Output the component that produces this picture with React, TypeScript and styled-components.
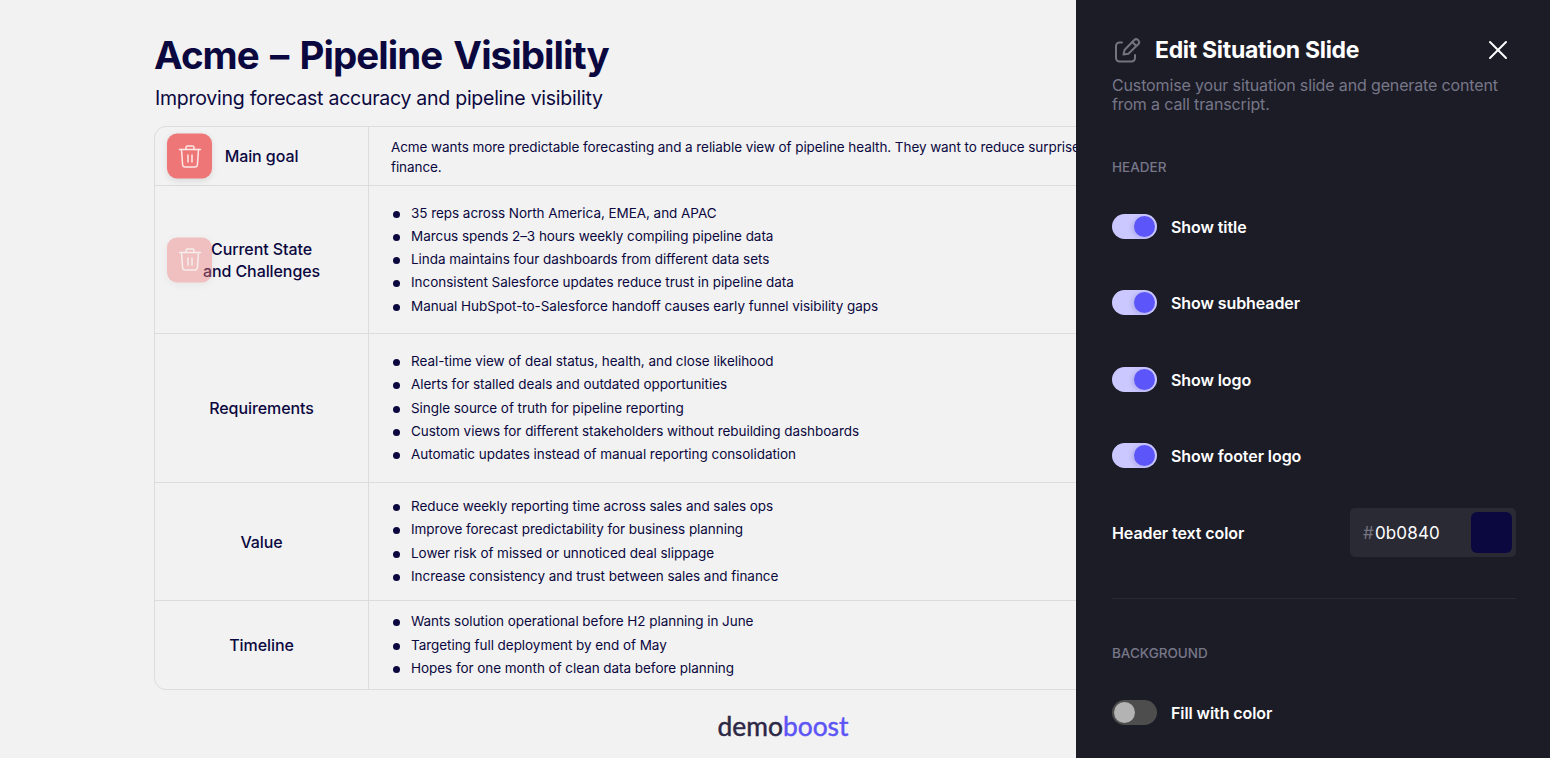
import React from "react";
import styled, { createGlobalStyle } from "styled-components";
import { X } from "lucide-react";

const GlobalStyle = createGlobalStyle`
  html, body {
    margin: 0;
    height: 100%;
    overflow: hidden;
    background: #f2f2f2;
    font-family: "Inter", "Open Sans", sans-serif;
  }
  * { box-sizing: border-box; }
`;

const Page = styled.div`
  position: relative;
  width: 100vw;
  height: 100vh;
  overflow: hidden;
  padding: 32px 138px 0 154px;
  color: #0b0840;
`;

const Title = styled.h1`
  margin: 0;
  font-size: 38.5px;
  line-height: 46px;
  font-weight: 700;
  letter-spacing: -0.95px;
  word-spacing: 3px;
`;

const Subtitle = styled.p`
  margin: 8px 0 16px 1px;
  font-size: 19.5px;
  line-height: 24px;
  font-weight: 400;
  letter-spacing: -0.26px;
`;

const Table = styled.div`
  border: 1px solid #dcdcdc;
  border-radius: 12px;
  display: grid;
  grid-template-columns: 214px 1fr;
  grid-template-rows: 59px 148px 149px 118px 88px;
`;

const Row = styled.div`
  display: contents;
`;

const LabelCell = styled.div<{ $last?: boolean }>`
  position: relative;
  display: flex;
  align-items: center;
  justify-content: center;
  text-align: center;
  border-right: 1px solid #dcdcdc;
  border-bottom: ${(p) => (p.$last ? "none" : "1px solid #dcdcdc")};
  font-size: 16px;
  line-height: 22px;
  font-weight: 500;
  letter-spacing: -0.08px;
`;

const ContentCell = styled.div<{ $last?: boolean }>`
  display: flex;
  flex-direction: column;
  justify-content: center;
  min-width: 0;
  padding: 0 6px 0 22px;
  border-bottom: ${(p) => (p.$last ? "none" : "1px solid #dcdcdc")};
  font-size: 13.5px;
  line-height: 20px;
  letter-spacing: -0.05px;
`;

const Paragraph = styled.p`
  margin: 2px 0 0;
  white-space: pre;
  letter-spacing: -0.08px;
`;

const Bullets = styled.ul`
  list-style: none;
  margin: -1px 0 0;
  padding: 0;
`;

const Bullet = styled.li`
  display: flex;
  align-items: center;
  gap: 11px;
  height: 23.25px;
  &::before {
    content: "";
    width: 7px;
    height: 7px;
    margin: 3px 0 0 2px;
    border-radius: 50%;
    background: #0b0840;
  }
`;

const DeleteButton = styled.button<{ $faded?: boolean }>`
  position: absolute;
  left: 12px;
  top: 50%;
  transform: translateY(-50%);
  width: 45px;
  height: 45px;
  padding: 0;
  border: none;
  border-radius: 10px;
  display: flex;
  align-items: center;
  justify-content: center;
  background: #ef7676;
  color: #fde8e8;
  box-shadow: 0 2px 6px rgba(0, 0, 0, 0.1);
  opacity: ${(p) => (p.$faded ? 0.4 : 1)};
`;

const Footer = styled.div`
  display: flex;
  justify-content: center;
  margin-top: 20px;
  font-family: "Lato", "Inter", sans-serif;
  font-size: 26.4px;
  line-height: 32px;
  font-weight: 400;
  color: #2b2745;
  -webkit-text-stroke: 0.45px #2b2745;
  span {
    color: #5c55f5;
    -webkit-text-stroke: 0.45px #5c55f5;
  }
`;

const Panel = styled.aside`
  position: absolute;
  top: 0;
  right: 0;
  bottom: 0;
  width: 474px;
  padding: 34px 34px 0 36px;
  background: #1c1c27;
  color: #fff;
  overflow: hidden;
`;

const PanelHead = styled.div`
  display: flex;
  align-items: center;
  gap: 14px;
  height: 32px;
  padding-left: 3px;
`;

const PanelIcon = styled.span`
  display: flex;
  color: #74747f;
`;

const PanelTitle = styled.h2`
  flex: 1;
  margin: 0;
  font-size: 23px;
  line-height: 32px;
  font-weight: 700;
  letter-spacing: -0.3px;
`;

const CloseButton = styled.button`
  display: flex;
  padding: 0;
  margin-right: 2px;
  background: none;
  border: none;
  color: #fff;
`;

const PanelIntro = styled.p`
  margin: 10px 0 0;
  font-size: 16px;
  line-height: 19px;
  color: #777788;
  letter-spacing: -0.14px;
`;

const SectionLabel = styled.div<{ $top: number }>`
  margin-top: ${(p) => p.$top}px;
  font-size: 13.5px;
  line-height: 18px;
  font-weight: 500;
  color: #777788;
`;

const ToggleRow = styled.div<{ $top?: number }>`
  display: flex;
  align-items: center;
  gap: 14px;
  height: 25px;
  margin-top: ${(p) => p.$top ?? 51.33}px;
`;

const Toggle = styled.span<{ $on?: boolean }>`
  position: relative;
  width: 45px;
  height: 25px;
  border-radius: 13px;
  background: ${(p) => (p.$on ? "#cbc8ff" : "#4d4d4d")};
  &::after {
    content: "";
    position: absolute;
    top: 2px;
    left: ${(p) => (p.$on ? "22px" : "2px")};
    width: 21px;
    height: 21px;
    border-radius: 50%;
    background: ${(p) => (p.$on ? "#5c55f9" : "#b3b3b3")};
    box-shadow: ${(p) => (p.$on ? "-2px 1px 4px rgba(60, 50, 160, 0.2)" : "none")};
  }
`;

const RowLabel = styled.span`
  padding-top: 1px;
  font-size: 16px;
  line-height: 22px;
  font-weight: 600;
  letter-spacing: -0.08px;
`;

const ColorRow = styled.div`
  display: flex;
  align-items: center;
  justify-content: space-between;
  margin-top: 40px;
`;

const ColorField = styled.div`
  display: flex;
  align-items: center;
  justify-content: space-between;
  width: 166px;
  height: 49px;
  padding: 4px 4px 4px 13px;
  border-radius: 5px;
  background: #2a2a35;
`;

const ColorValue = styled.span`
  padding-top: 1px;
  font-size: 17px;
  letter-spacing: 0.15px;
  i {
    margin-right: 1px;
    font-style: normal;
    color: #74747f;
  }
`;

const Swatch = styled.span`
  width: 41px;
  height: 41px;
  border-radius: 6px;
  background: #0b0840;
`;

const Divider = styled.hr`
  margin: 41px 0 0;
  border: none;
  border-top: 1px solid #2a2a35;
`;

const TrashIcon = () => (
  <svg width="24" height="26" viewBox="0 0 24 26" fill="none" stroke="currentColor" strokeWidth="1.5" strokeLinecap="round" strokeLinejoin="round">
    <path d="M1.5 6h21" />
    <path d="M8 6V4a1.5 1.5 0 0 1 1.5-1.5h5A1.5 1.5 0 0 1 16 4v2" />
    <path d="M3.5 6l1.1 15.2a2.5 2.5 0 0 0 2.5 2.3h9.8a2.5 2.5 0 0 0 2.5-2.3L20.5 6" />
    <path d="M10 11.5v7M14 11.5v7" />
  </svg>
);

const PenIcon = () => (
  <svg width="26" height="26" viewBox="0 0 26 26" fill="none" stroke="currentColor" strokeWidth="2" strokeLinecap="round" strokeLinejoin="round">
    <path d="M7 5.5H4.5A3.5 3.5 0 0 0 1 9v12a3.5 3.5 0 0 0 3.5 3.5h12a3.5 3.5 0 0 0 3.5-3.5v-3" />
    <path d="M8.5 17.5l1-4.5L19 3.2a2.9 2.9 0 0 1 4.2 4.1l-9.8 9.4z" />
    <path d="M17.3 5l4 4" />
  </svg>
);

const rows = [
  {
    label: ["Main goal"],
    text: "Acme wants more predictable forecasting and a reliable view of pipeline health. They want to reduce surprises late in the quarter and build trust between sales and\nfinance.",
    remove: "solid",
  },
  {
    label: ["Current State", "and Challenges"],
    remove: "faded",
    items: [
      "35 reps across North America, EMEA, and APAC",
      "Marcus spends 2–3 hours weekly compiling pipeline data",
      "Linda maintains four dashboards from different data sets",
      "Inconsistent Salesforce updates reduce trust in pipeline data",
      "Manual HubSpot-to-Salesforce handoff causes early funnel visibility gaps",
    ],
  },
  {
    label: ["Requirements"],
    items: [
      "Real-time view of deal status, health, and close likelihood",
      "Alerts for stalled deals and outdated opportunities",
      "Single source of truth for pipeline reporting",
      "Custom views for different stakeholders without rebuilding dashboards",
      "Automatic updates instead of manual reporting consolidation",
    ],
  },
  {
    label: ["Value"],
    items: [
      "Reduce weekly reporting time across sales and sales ops",
      "Improve forecast predictability for business planning",
      "Lower risk of missed or unnoticed deal slippage",
      "Increase consistency and trust between sales and finance",
    ],
  },
  {
    label: ["Timeline"],
    items: [
      "Wants solution operational before H2 planning in June",
      "Targeting full deployment by end of May",
      "Hopes for one month of clean data before planning",
    ],
  },
];

const App = () => {
  return (
    <>
      <GlobalStyle />
      <Page>
        <Title>Acme – Pipeline Visibility</Title>
        <Subtitle>Improving forecast accuracy and pipeline visibility</Subtitle>
        <Table>
          {rows.map((row, i) => {
            const last = i === rows.length - 1;
            return (
              <Row key={row.label[0]}>
                <LabelCell $last={last}>
                  {row.remove && (
                    <DeleteButton $faded={row.remove === "faded"}>
                      <TrashIcon />
                    </DeleteButton>
                  )}
                  <div>
                    {row.label.map((line) => (
                      <div key={line}>{line}</div>
                    ))}
                  </div>
                </LabelCell>
                <ContentCell $last={last}>
                  {row.items ? (
                    <Bullets>
                      {row.items.map((item) => (
                        <Bullet key={item}>{item}</Bullet>
                      ))}
                    </Bullets>
                  ) : (
                    <Paragraph>{row.text}</Paragraph>
                  )}
                </ContentCell>
              </Row>
            );
          })}
        </Table>
        <Footer>
          <div>
            demo<span>boost</span>
          </div>
        </Footer>

        <Panel>
          <PanelHead>
            <PanelIcon>
              <PenIcon />
            </PanelIcon>
            <PanelTitle>Edit Situation Slide</PanelTitle>
            <CloseButton>
              <X size={32} strokeWidth={1.5} />
            </CloseButton>
          </PanelHead>
          <PanelIntro>
            Customise your situation slide and generate content from a call transcript.
          </PanelIntro>

          <SectionLabel $top={44}>HEADER</SectionLabel>
          <ToggleRow $top={38}>
            <Toggle $on />
            <RowLabel>Show title</RowLabel>
          </ToggleRow>
          <ToggleRow>
            <Toggle $on />
            <RowLabel>Show subheader</RowLabel>
          </ToggleRow>
          <ToggleRow>
            <Toggle $on />
            <RowLabel>Show logo</RowLabel>
          </ToggleRow>
          <ToggleRow>
            <Toggle $on />
            <RowLabel>Show footer logo</RowLabel>
          </ToggleRow>
          <ColorRow>
            <RowLabel>Header text color</RowLabel>
            <ColorField>
              <ColorValue>
                <i>#</i>0b0840
              </ColorValue>
              <Swatch />
            </ColorField>
          </ColorRow>
          <Divider />

          <SectionLabel $top={45}>BACKGROUND</SectionLabel>
          <ToggleRow $top={38}>
            <Toggle />
            <RowLabel>Fill with color</RowLabel>
          </ToggleRow>
        </Panel>
      </Page>
    </>
  );
};

export default App;
